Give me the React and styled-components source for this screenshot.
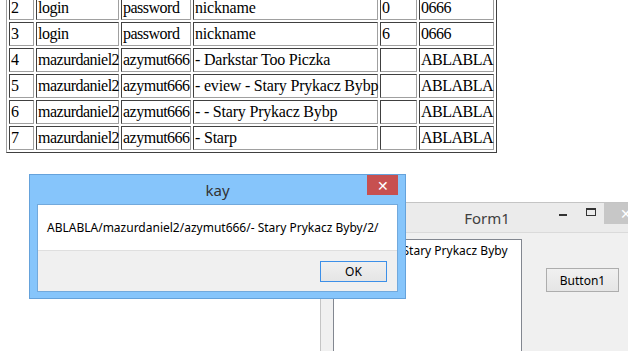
import React from 'react';
import styled, { createGlobalStyle } from 'styled-components';

const GlobalStyle = createGlobalStyle`
    html, body {
        margin: 0;
        padding: 0;
        background: #ffffff;
    }
`;

const Screen = styled.div`
    position: relative;
    width: 628px;
    height: 351px;
    overflow: hidden;
    background: #ffffff;
    padding-left: 6px;
    box-sizing: border-box;
`;

const Grid = styled.table`
    margin-top: -7px;
    border-collapse: separate;
    border-spacing: 2px;
    border: 1px solid;
    border-color: #a0a0a0 #404040 #404040 #a0a0a0;
    table-layout: fixed;
    width: 491px;
    font-family: "Liberation Serif", "Times New Roman", serif;
    font-size: 16px;
    color: #000;
`;

const Cell = styled.td`
    box-sizing: border-box;
    height: 24px;
    padding: 0 0 0 1px;
    border: 1px solid;
    border-color: #404040 #a0a0a0 #a0a0a0 #404040;
    white-space: nowrap;
    vertical-align: middle;
    line-height: 20px;
    letter-spacing: ${p => (p.$wide ? '-0.2px' : '-0.5px')};
`;

const Window = styled.div`
    position: absolute;
    left: ${p => p.$left}px;
    top: ${p => p.$top}px;
    width: ${p => p.$width}px;
    height: ${p => p.$height}px;
    box-sizing: border-box;
    display: flex;
    flex-direction: column;
    font-family: "Noto Sans", "Open Sans", sans-serif;
`;

const FormFrame = styled(Window)`
    background: #ebebeb;
    border: 1px solid #c4c4c4;
`;

const FormTitle = styled.div`
    position: relative;
    height: 29px;
    flex: none;
    display: flex;
    align-items: center;
    justify-content: center;
    border-bottom: 1px solid #dadada;
    font-size: 15px;
    color: #404040;
`;

const Caption = styled.div`
    position: absolute;
    right: ${p => p.$right}px;
    top: 0;
    display: flex;
    height: 21px;
    align-items: center;
`;

const MinGlyph = styled.div`
    width: 8px;
    height: 2px;
    background: #333;
    margin-top: 3px;
`;

const MaxGlyph = styled.div`
    width: 10px;
    height: 8px;
    box-sizing: border-box;
    border: 1px solid #333;
    border-top-width: 2px;
    margin-top: -3px;
`;

const GreyClose = styled.div`
    position: absolute;
    left: 283px;
    top: 0;
    width: 46px;
    height: 21px;
    background: #c7c7c7;
    color: #fff;
    font-size: 14px;
    display: flex;
    align-items: center;
    padding-left: 16px;
    box-sizing: border-box;
`;

const FormClient = styled.div`
    flex: 1;
    display: flex;
    align-items: flex-start;
    gap: 24px;
    padding: 6px 0 0 12px;
    background: #f0f0f0;
`;

const TextArea = styled.div`
    width: 189px;
    height: 140px;
    box-sizing: border-box;
    background: #fff;
    border: 1px solid #828790;
    font-size: 12px;
    color: #000;
    padding: 2px 3px;
    text-indent: -8px;
    white-space: nowrap;
    overflow: hidden;
`;

const WinButton = styled.div`
    width: ${p => p.$w}px;
    height: ${p => p.$h}px;
    box-sizing: border-box;
    border: 1px solid ${p => (p.$focused ? '#3c8fe8' : '#adadad')};
    background: linear-gradient(#f0f0f0, #e5e5e5);
    display: flex;
    align-items: center;
    justify-content: center;
    font-family: "Noto Sans", "Open Sans", sans-serif;
    font-size: 12px;
    color: #000;
    margin-top: ${p => p.$mt || 0}px;
`;

const Dialog = styled(Window)`
    background: #86c5fb;
    border: 1px solid #65a2db;
    padding: 0 7px 6px 7px;
`;

const DialogTitle = styled.div`
    position: relative;
    height: 29px;
    flex: none;
    display: flex;
    align-items: center;
    justify-content: center;
    font-size: 15px;
    color: #333;
`;

const RedClose = styled.div`
    position: absolute;
    right: 0;
    top: 0;
    width: 31px;
    height: 20px;
    background: #c75050;
    color: #fff;
    font-size: 14px;
    display: flex;
    align-items: center;
    justify-content: center;
`;

const DialogBody = styled.div`
    flex: 1;
    display: flex;
    flex-direction: column;
    border: 1px solid #72a9dc;
`;

const Message = styled.div`
    height: 45px;
    background: #fff;
    border-bottom: 1px solid #dfdfdf;
    display: flex;
    align-items: center;
    padding-left: 9px;
    font-size: 12px;
    color: #000;
`;

const Footer = styled.div`
    flex: 1;
    background: #f0f0f0;
    display: flex;
    justify-content: flex-end;
    align-items: flex-start;
    padding: 10px 10px 0 0;
`;

const rows = [
    ['2', 'login', 'password', 'nickname', '0', '0666'],
    ['3', 'login', 'password', 'nickname', '6', '0666'],
    ['4', 'mazurdaniel2', 'azymut666', '- Darkstar Too Piczka', '', 'ABLABLA'],
    ['5', 'mazurdaniel2', 'azymut666', '- eview - Stary Prykacz Bybp', '', 'ABLABLA'],
    ['6', 'mazurdaniel2', 'azymut666', '- - Stary Prykacz Bybp', '', 'ABLABLA'],
    ['7', 'mazurdaniel2', 'azymut666', '- Starp', '', 'ABLABLA'],
];

const widths = [25, 83, 70, 185, 37, 75];

export default function App() {
    return (
        <>
            <GlobalStyle />
            <Screen>
                <Grid>
                    <colgroup>
                        {widths.map((w, i) => <col key={i} style={{ width: w }} />)}
                    </colgroup>
                    <tbody>
                        {rows.map(r => (
                            <tr key={r[0]}>
                                {r.map((c, i) => <Cell key={i} $wide={i === 3}>{c}</Cell>)}
                            </tr>
                        ))}
                    </tbody>
                </Grid>

                <FormFrame $left={320} $top={202} $width={334} $height={200}>
                    <FormTitle>
                        Form1
                        <Caption $right={86}><MinGlyph /></Caption>
                        <Caption $right={57}><MaxGlyph /></Caption>
                        <GreyClose>✕</GreyClose>
                    </FormTitle>
                    <FormClient>
                        <TextArea>azymut666/- Stary Prykacz Byby</TextArea>
                        <WinButton $w={73} $h={24} $mt={29}>Button1</WinButton>
                    </FormClient>
                </FormFrame>

                <Dialog $left={29} $top={174} $width={377} $height={125}>
                    <DialogTitle>
                        kay
                        <RedClose>✕</RedClose>
                    </DialogTitle>
                    <DialogBody>
                        <Message>ABLABLA/mazurdaniel2/azymut666/- Stary Prykacz Byby/2/</Message>
                        <Footer>
                            <WinButton $w={67} $h={21} $focused>OK</WinButton>
                        </Footer>
                    </DialogBody>
                </Dialog>
            </Screen>
        </>
    );
}
